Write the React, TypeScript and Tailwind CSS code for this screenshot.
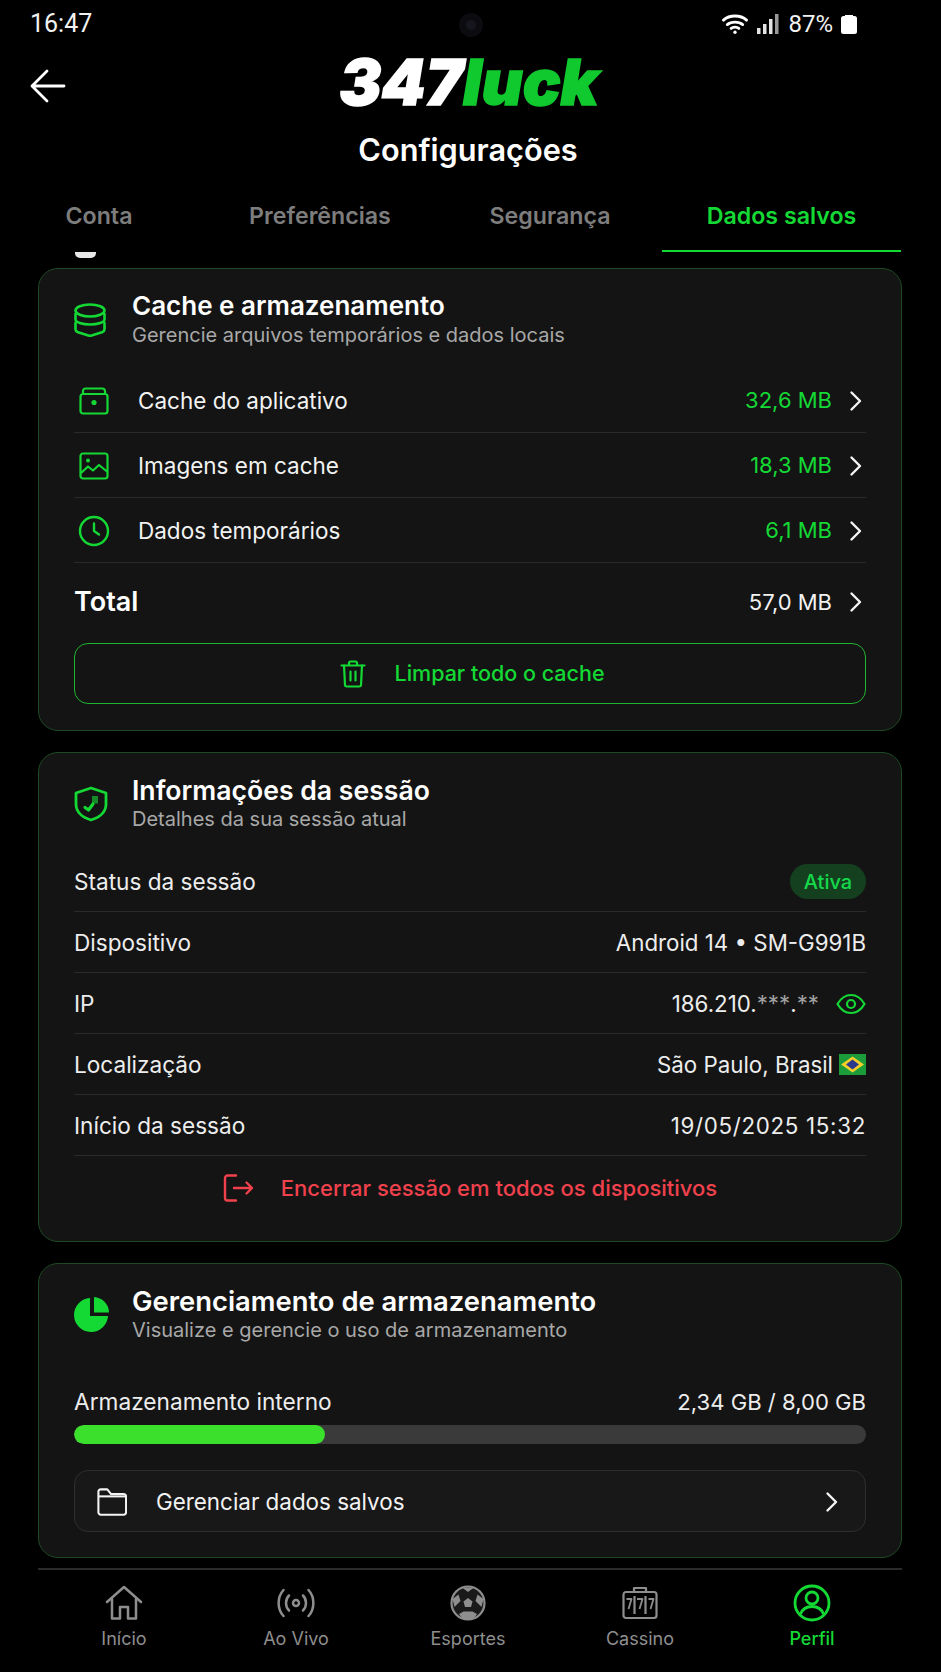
import { ReactNode } from "react";

const GREEN = "#14d935";

function Chevron({ className = "" }: { className?: string }) {
  return (
    <svg width="16" height="24" viewBox="0 0 16 24" fill="none" stroke="#f4f4f4" strokeWidth="2.4" strokeLinecap="round" strokeLinejoin="round" className={className}>
      <path d="M3.5 3.5 12 12l-8.5 8.5" />
    </svg>
  );
}

function DbIcon() {
  return (
    <svg width="32" height="34" viewBox="0 0 32 34" fill="none" stroke={GREEN} strokeWidth="2.600" strokeLinejoin="round" strokeLinecap="round">
      <ellipse cx="16" cy="7.500" rx="14.500" ry="6" />
      <path d="M1.500 11v5.500c0 2.800 6.500 5 14.500 5s14.500-2.200 14.500-5V11" />
      <path d="M1.500 20v6.500c0 1.500 1 2 2.500 2.700L16 33l12-3.800c1.500-.7 2.500-1.200 2.500-2.700V20" />
    </svg>
  );
}

function CacheIcon() {
  return (
    <svg width="30" height="28" viewBox="0 0 30 28" fill="none" stroke={GREEN} strokeWidth="2.200" strokeLinejoin="round">
      <rect x="1.500" y="7" width="27" height="19.500" rx="2.500" />
      <path d="M4 7V4a2.500 2.500 0 0 1 2.500-2.500h17A2.500 2.500 0 0 1 26 4v3" />
      <circle cx="15" cy="15.500" r="1.500" fill={GREEN} />
    </svg>
  );
}

function ImageIcon() {
  return (
    <svg width="30" height="28" viewBox="0 0 30 28" fill="none" stroke={GREEN} strokeWidth="2.200" strokeLinejoin="round">
      <rect x="1.500" y="1.500" width="27" height="25" rx="2.500" />
      <circle cx="9" cy="8.500" r="2" fill={GREEN} stroke="none" />
      <path d="m2 21 7-6.500 5 4 6-5.500 8 6.500" />
    </svg>
  );
}

function ClockIcon() {
  return (
    <svg width="32" height="32" viewBox="0 0 32 32" fill="none" stroke={GREEN} strokeWidth="2.400" strokeLinecap="round" strokeLinejoin="round" className="-ml-[1px]">
      <circle cx="16" cy="16" r="14" />
      <path d="M16 8.500V16l5 3.500" />
    </svg>
  );
}

function TrashIcon() {
  return (
    <svg width="26" height="28" viewBox="0 0 26 28" fill="none" stroke={GREEN} strokeWidth="2.200" strokeLinecap="round" strokeLinejoin="round">
      <path d="M1.500 5.500h23M9 5.500V3a1.500 1.500 0 0 1 1.500-1.500h5A1.500 1.500 0 0 1 17 3v2.500" />
      <path d="M4 5.500 5 25a1.500 1.500 0 0 0 1.500 1.500h13A1.500 1.500 0 0 0 21 25l1-19.500" />
      <path d="M10.500 11.500v9M15.500 11.500v9" />
    </svg>
  );
}

function ShieldIcon() {
  return (
    <svg width="34" height="36" viewBox="0 0 34 36" fill="none" stroke={GREEN} strokeWidth="2.800" strokeLinejoin="round" strokeLinecap="round">
      <path d="M17 2 32 7v11c0 8-6.500 13.500-15 16C8.500 31.500 2 26 2 18V7z" />
      <path d="M11 21.500 14.500 24l4.500-6" strokeWidth="3.200" />
      <path d="M18 10h6v7.500h-6z" fill={GREEN} fillOpacity="0.6" stroke="none" />
    </svg>
  );
}

function LogoutIcon() {
  return (
    <svg width="32" height="28" viewBox="0 0 32 28" fill="none" stroke="#f0414d" strokeWidth="2.400" strokeLinecap="round" strokeLinejoin="round">
      <path d="M13 1.500H4.500a2.500 2.500 0 0 0-2.500 2.500v20a2.500 2.500 0 0 0 2.500 2.500H13" />
      <path d="M11 14h18M23.500 8.500 29 14l-5.500 5.500" />
    </svg>
  );
}

function PieIcon() {
  return (
    <svg width="36" height="36" viewBox="0 0 36 36" fill={GREEN}>
      <path d="M16 2v18h18A17 17 0 1 1 16 2z" transform="translate(0 -1)" />
      <path d="M20 0a16 16 0 0 1 15 15.500H20z" />
    </svg>
  );
}

function EyeIcon() {
  return (
    <svg width="30" height="22" viewBox="0 0 30 22" fill="none" stroke={GREEN} strokeWidth="2.200" strokeLinejoin="round">
      <path d="M1.500 11C5 5 9.500 2 15 2s10 3 13.500 9C25 17 20.500 20 15 20S5 17 1.500 11z" />
      <circle cx="15" cy="11" r="4" />
    </svg>
  );
}

function BrazilFlag() {
  return (
    <svg width="27" height="21" viewBox="0 0 27 21">
      <rect width="27" height="21" fill="#1c9b3a" />
      <path d="M13.500 2.500 25 10.500l-11.500 8L2 10.500z" fill="#f4cf2a" />
      <path d="M13.500 5.500 20 10.500l-6.500 5-6.500-5z" fill="#2d3a8c" />
    </svg>
  );
}

function FolderIcon() {
  return (
    <svg width="30" height="30" viewBox="0 0 32 30" fill="none" stroke="#f4f4f4" strokeWidth="2.200" strokeLinejoin="round" className="-ml-[1px] mr-[2px]">
      <path d="M1.500 4A2.500 2.500 0 0 1 4 1.500h7l4 5h13.500A2.500 2.500 0 0 1 31 9v17a2.500 2.500 0 0 1-2.500 2.500H4A2.500 2.500 0 0 1 1.500 26z" />
      <path d="M1.500 9H31" />
    </svg>
  );
}

function HomeIcon() {
  return (
    <svg width="38" height="36" viewBox="0 0 38 36" fill="none" stroke="#8e8e8e" strokeWidth="2.500" strokeLinejoin="round" strokeLinecap="round">
      <path d="M2 17 19 2l17 15" />
      <path d="M7 14v19.500h8V22h8v11.500h8V14" />
    </svg>
  );
}

function LiveIcon() {
  return (
    <svg width="38" height="32" viewBox="0 0 38 32" fill="none" stroke="#8e8e8e" strokeWidth="2.500" strokeLinecap="round">
      <circle cx="19" cy="16" r="3" />
      <path d="M12 8.500c-4 4-4 11 0 15M26 8.500c4 4 4 11 0 15" />
      <path d="M6.500 3C0 10 0 22 6.500 29M31.500 3C38 10 38 22 31.500 29" />
    </svg>
  );
}

function BallIcon() {
  return (
    <svg width="36" height="36" viewBox="0 0 36 36" fill="none">
      <circle cx="18" cy="18" r="16.500" fill="#1a1a1a" stroke="#8e8e8e" strokeWidth="2.200" />
      <g fill="#8e8e8e">
        <path d="M18 13 22.500 16.500 21 22h-6l-1.500-5.500z" />
        <path d="M12 2.500h12L18 7z" />
        <path d="M2.500 14 8.500 9.500l2 6.500-6 6z" />
        <path d="M33.500 14 27.500 9.500l-2 6.500 6 6z" />
        <path d="M9 29l4.500-2.500h9L27 29l-3.500 5h-11z" />
      </g>
    </svg>
  );
}

function SlotIcon() {
  return (
    <svg width="36" height="34" viewBox="0 0 36 34" fill="none" stroke="#8e8e8e" strokeWidth="2.200" strokeLinejoin="round">
      <rect x="1.500" y="6" width="33" height="26" rx="2.500" />
      <path d="M12 6V2h12v4M12.500 10v18M23.500 10v18" />
      <path d="M4.500 13h5l-3 10M15 13h5.500l-3 10M26.500 13h5l-3 10" strokeWidth="1.800" />
    </svg>
  );
}

function ProfileIcon() {
  return (
    <svg width="38" height="38" viewBox="0 0 38 38" fill="none" stroke={GREEN} strokeWidth="2.800">
      <circle cx="19" cy="19" r="17" />
      <circle cx="19" cy="14" r="6" />
      <path d="M7.500 30c2-5 6-7.500 11.500-7.500S28.500 25 30.500 30" />
    </svg>
  );
}

function CardHead({ icon, title, sub, titleClass }: { icon: ReactNode; title: string; sub: string; titleClass: string }) {
  return (
    <div className="flex items-center">
      <div className="w-[58px] flex items-center">{icon}</div>
      <div>
        <div className={`${titleClass} leading-[30px] font-semibold text-white`}>{title}</div>
        <div className="text-[20px] leading-[26px] mt-px text-[#a8a8a8]">{sub}</div>
      </div>
    </div>
  );
}

function CacheRow({ icon, label, value }: { icon: ReactNode; label: string; value: string }) {
  return (
    <div className="h-[65px] pt-[1px] flex items-center border-b border-[#2a2a2a]">
      <div className="w-[64px] pl-[5px] flex items-center">{icon}</div>
      <span className="text-[22.5px] text-[#f2f2f2]">{label}</span>
      <span className="ml-auto text-[22px] text-[#14d935]">{value}</span>
      <Chevron className="ml-[16px] mr-[2px]" />
    </div>
  );
}

function InfoRow({ label, children }: { label: string; children: ReactNode }) {
  return (
    <div className="h-[61px] pt-[1px] flex items-center justify-between border-b border-[#2a2a2a]">
      <span className="text-[22.600px] text-[#ededed]">{label}</span>
      <div className="flex items-center text-[22.300px] text-[#ededed]">{children}</div>
    </div>
  );
}

function NavItem({ icon, label, active = false }: { icon: ReactNode; label: string; active?: boolean }) {
  return (
    <div className="w-[172px] flex flex-col items-center">
      <div className="h-[38px] flex items-center justify-center">{icon}</div>
      <span className={active ? "mt-[4px] text-[18px] leading-[26px] font-medium text-[#14d935]" : "mt-[4px] text-[18px] leading-[26px] text-[#8e8e8e]"}>{label}</span>
    </div>
  );
}

export default function App() {
  return (
    <div className="relative w-[941px] h-[1672px] overflow-hidden bg-black text-white font-['Inter',sans-serif]">
      {/* camera hole */}
      <div className="absolute left-[459px] top-[13px] w-[24px] h-[24px] rounded-full bg-[#0c0c10] flex items-center justify-center">
        <div className="w-[10px] h-[10px] rounded-full bg-[#16161e]" />
      </div>

      {/* status bar */}
      <div className="h-[48px] pl-[30px] pr-[84px] flex items-center font-['Roboto',sans-serif]">
        <span className="text-[25px] text-[#f2f2f2]">16:47</span>
        <div className="ml-auto flex items-center">
          <svg width="28" height="22" viewBox="0 0 24 20" fill="none" stroke="#fff" strokeWidth="2.600" strokeLinecap="round">
            <path d="M1.500 6.500c5.500-5 15.500-5 21 0M5 10.500c3.500-3 10.500-3 14 0M8.500 14c1.800-1.500 5.200-1.500 7 0" />
            <circle cx="12" cy="17.500" r="1.500" fill="#fff" stroke="none" />
          </svg>
          <svg width="22" height="20" viewBox="0 0 22 20" fill="#e4e4e4" className="ml-[8px]">
            <rect x="0" y="14" width="3.500" height="6" />
            <rect x="6" y="10" width="3.500" height="10" />
            <rect x="12" y="5" width="3.500" height="15" />
            <rect x="18" y="0" width="3.500" height="20" fill="#9a9a9a" />
          </svg>
          <span className="ml-[9px] text-[24px] text-[#f2f2f2]">87%</span>
          <svg width="16" height="20" viewBox="0 0 16 20" fill="#fff" className="ml-[8px]">
            <path d="M4 2V1h8v1h1.500A2.500 2.500 0 0 1 16 4.500v13a2.500 2.500 0 0 1-2.500 2.500h-11A2.500 2.500 0 0 1 0 17.500v-13A2.500 2.500 0 0 1 2.500 2z" />
          </svg>
        </div>
      </div>

      {/* logo + title */}
      <div className="relative h-[68px] flex items-center justify-center pr-[3px]">
        <svg width="36" height="34" viewBox="0 0 36 34" fill="none" stroke="#fff" strokeWidth="2.800" strokeLinecap="round" strokeLinejoin="round" className="absolute left-[30px] top-[21px]">
          <path d="M34 17H2M17 2 2 17l15 15" />
        </svg>
        <div className="font-black italic text-[63px] leading-none [-webkit-text-stroke-width:1.5px]">
          <span className="text-white">347</span>
          <span className="text-[#10c92e]">luck</span>
        </div>
      </div>
      <div className="mt-[14px] h-[40px] flex items-center justify-center text-[30.700px] font-semibold text-white pr-[5px]">Configurações</div>

      {/* tabs */}
      <div className="mt-[20px] h-[62px] pl-[38px] flex text-[23.200px] font-semibold text-[#7d7d7d]">
        <div className="w-[122px] pt-[9px] text-center leading-[34px]">Conta</div>
        <div className="ml-[40px] w-[240px] pt-[9px] text-center leading-[34px]">Preferências</div>
        <div className="w-[220px] pt-[9px] text-center leading-[34px]">Segurança</div>
        <div className="ml-[2px] w-[239px] pt-[9px] text-center leading-[34px] text-[#14d935] border-b-2 border-[#14d935]">Dados salvos</div>
      </div>
      <div className="h-[16px] pl-[75px]">
        <div className="w-[21px] h-[6px] bg-[#e8e8e8] rounded-b-[5px]" />
      </div>

      {/* cards */}
      <div className="w-[864px] ml-[38px] flex flex-col gap-[21px]">
        <section className="h-[463px] rounded-[20px] border border-[#1d4a24] bg-[#141414] px-[35px] pt-[22px]">
          <CardHead icon={<DbIcon />} title="Cache e armazenamento" sub="Gerencie arquivos temporários e dados locais" titleClass="text-[26px]" />
          <div className="mt-[20px]">
            <CacheRow icon={<CacheIcon />} label="Cache do aplicativo" value="32,6 MB" />
            <CacheRow icon={<ImageIcon />} label="Imagens em cache" value="18,3 MB" />
            <CacheRow icon={<ClockIcon />} label="Dados temporários" value="6,1 MB" />
          </div>
          <div className="h-[80px] pb-[2px] flex items-center">
            <span className="text-[27px] font-semibold text-white">Total</span>
            <span className="ml-auto text-[22px] text-[#f2f2f2]">57,0 MB</span>
            <Chevron className="ml-[16px] mr-[2px]" />
          </div>
          <div className="h-[61px] rounded-[14px] border border-[#1fb52f] flex items-center justify-center pl-[5px]">
            <TrashIcon />
            <span className="ml-[28px] text-[21.500px] font-medium text-[#14d935]">Limpar todo o cache</span>
          </div>
        </section>

        <section className="h-[490px] rounded-[20px] border border-[#1d4a24] bg-[#141414] px-[35px] pt-[22px]">
          <CardHead icon={<ShieldIcon />} title="Informações da sessão" sub="Detalhes da sua sessão atual" titleClass="text-[26.600px]" />
          <div className="mt-[19px]">
            <InfoRow label="Status da sessão">
              <span className="w-[76px] h-[35px] rounded-full bg-[#14401f] flex items-center justify-center text-[20px] font-medium text-[#14d94a]">Ativa</span>
            </InfoRow>
            <InfoRow label="Dispositivo">Android 14 • SM-G991B</InfoRow>
            <InfoRow label="IP">
              186.210.<span className="text-[#a0a0a0]">***</span>.<span className="text-[#a0a0a0]">**</span>
              <span className="ml-[17px] flex"><EyeIcon /></span>
            </InfoRow>
            <InfoRow label="Localização">
              São Paulo, Brasil
              <span className="ml-[6px] flex"><BrazilFlag /></span>
            </InfoRow>
            <InfoRow label="Início da sessão">
              <span className="tracking-[0.7px]">19/05/2025 15:32</span>
            </InfoRow>
          </div>
          <div className="h-[64px] flex items-center justify-center">
            <LogoutIcon />
            <span className="ml-[26px] text-[22px] font-medium text-[#f0414d]">Encerrar sessão em todos os dispositivos</span>
          </div>
        </section>

        <section className="h-[295px] rounded-[20px] border border-[#1d4a24] bg-[#141414] px-[35px] pt-[22px]">
          <CardHead icon={<PieIcon />} title="Gerenciamento de armazenamento" sub="Visualize e gerencie o uso de armazenamento" titleClass="text-[27.400px]" />
          <div className="mt-[45px] flex items-center justify-between leading-[28px] text-[#ededed]">
            <span className="text-[22.700px]">Armazenamento interno</span>
            <span className="text-[22.100px]">2,34 GB / 8,00 GB</span>
          </div>
          <div className="mt-[9px] h-[19px] rounded-full bg-[#3a3a3a] overflow-hidden">
            <div className="w-[251px] h-full rounded-full bg-[#3be02c]" />
          </div>
          <div className="mt-[26px] h-[62px] pt-[1px] rounded-[14px] border border-[#2f2f2f] bg-[#181818] flex items-center pl-[23px] pr-[25px]">
            <FolderIcon />
            <span className="ml-[27px] text-[22.400px] text-[#f2f2f2]">Gerenciar dados salvos</span>
            <Chevron className="ml-auto" />
          </div>
        </section>
      </div>

      {/* bottom nav */}
      <div className="ml-[38px] mt-[10px] w-[864px] border-t-2 border-[#2a2a2a] pt-[14px] flex">
        <NavItem icon={<HomeIcon />} label="Início" />
        <NavItem icon={<LiveIcon />} label="Ao Vivo" />
        <NavItem icon={<BallIcon />} label="Esportes" />
        <NavItem icon={<SlotIcon />} label="Cassino" />
        <NavItem icon={<ProfileIcon />} label="Perfil" active />
      </div>
    </div>
  );
}
